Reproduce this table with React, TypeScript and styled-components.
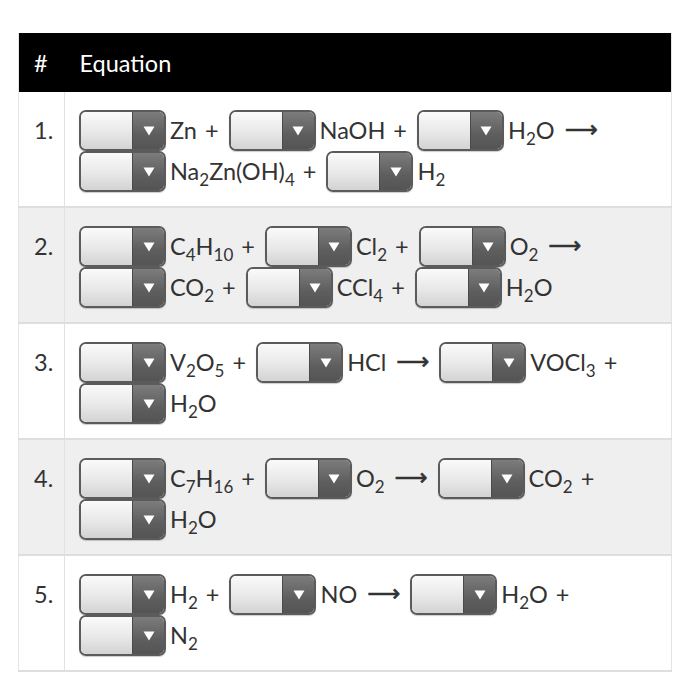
import React from 'react';
import styled, { createGlobalStyle } from 'styled-components';

type Part = string | { sub: string };
type Term = { formula: Part[]; op?: string };

const ARROW = '\u27F6';

const f = (...parts: Part[]) => parts;
const s = (sub: string) => ({ sub });

const equations: Term[][] = [
  [
    { formula: f('Zn'), op: '+' },
    { formula: f('NaOH'), op: '+' },
    { formula: f('H', s('2'), 'O'), op: ARROW },
    { formula: f('Na', s('2'), 'Zn(OH)', s('4')), op: '+' },
    { formula: f('H', s('2')) },
  ],
  [
    { formula: f('C', s('4'), 'H', s('10')), op: '+' },
    { formula: f('Cl', s('2')), op: '+' },
    { formula: f('O', s('2')), op: ARROW },
    { formula: f('CO', s('2')), op: '+' },
    { formula: f('CCl', s('4')), op: '+' },
    { formula: f('H', s('2'), 'O') },
  ],
  [
    { formula: f('V', s('2'), 'O', s('5')), op: '+' },
    { formula: f('HCl'), op: ARROW },
    { formula: f('VOCl', s('3')), op: '+' },
    { formula: f('H', s('2'), 'O') },
  ],
  [
    { formula: f('C', s('7'), 'H', s('16')), op: '+' },
    { formula: f('O', s('2')), op: ARROW },
    { formula: f('CO', s('2')), op: '+' },
    { formula: f('H', s('2'), 'O') },
  ],
  [
    { formula: f('H', s('2')), op: '+' },
    { formula: f('NO'), op: ARROW },
    { formula: f('H', s('2'), 'O'), op: '+' },
    { formula: f('N', s('2')) },
  ],
];

const GlobalStyle = createGlobalStyle`
  body {
    margin: 0;
    background: #fff;
    font-family: Lato, "Open Sans", sans-serif;
    color: #333;
  }
`;

const Page = styled.div`
  padding: 33px 17px 20px 18px;
`;

const Table = styled.table`
  width: 654px;
  table-layout: fixed;
  border-collapse: collapse;
  border: 1px solid #e4e4e4;
  border-top: none;
  font-size: 23.5px;
`;

const HeadCell = styled.th`
  height: 59px;
  padding: 0 0 0 15px;
  background: #000;
  color: #fff;
  font-weight: 400;
  text-align: left;
`;

const Row = styled.tr<{ $shaded: boolean }>`
  background: ${({ $shaded }) => ($shaded ? '#efefef' : '#fff')};
  border-bottom: 2px solid #dedede;
`;

const NumCell = styled.td`
  vertical-align: top;
  padding: 18px 0 14px 15px;
  line-height: 41px;
  border-right: 1px solid #e2e2e2;
`;

const EqCell = styled.td`
  vertical-align: top;
  padding: 18px 12px 14px 14px;
`;

const Terms = styled.div`
  display: flex;
  flex-wrap: wrap;
  align-items: center;
  column-gap: 10px;
`;

const TermGroup = styled.span`
  display: inline-flex;
  align-items: center;
  gap: 4px;
  height: 41px;
  white-space: nowrap;
`;

const Formula = styled.span`
  line-height: 1;
`;

const Sub = styled.sub`
  font-size: 17px;
  line-height: 0;
  vertical-align: -6px;
`;

const Op = styled.span<{ $arrow: boolean }>`
  margin-left: ${({ $arrow }) => ($arrow ? '10px' : '8px')};
  font-family: ${({ $arrow }) => ($arrow ? '"DejaVu Sans", sans-serif' : 'inherit')};
  font-size: ${({ $arrow }) => ($arrow ? '23px' : 'inherit')};
  -webkit-text-stroke: ${({ $arrow }) => ($arrow ? '0.6px #333' : '0')};
  position: relative;
  top: ${({ $arrow }) => ($arrow ? '-2px' : '0')};
`;

const Select = styled.span`
  display: inline-flex;
  width: 87px;
  height: 41px;
  box-sizing: border-box;
  border: 2px solid #5b5b5b;
  border-radius: 7px;
  overflow: hidden;
  box-shadow: 0 1px 1px rgba(0, 0, 0, 0.2);
`;

const SelectValue = styled.span`
  flex: 1;
  background: linear-gradient(#fafafa, #e8e8e8 55%, #d3d3d3);
`;

const SelectButton = styled.span`
  width: 31px;
  display: flex;
  align-items: center;
  justify-content: center;
  background: linear-gradient(#7c7c7c, #5e5e5e 60%, #545454);
  border-left: 1px solid #4a4a4a;
`;

const Dropdown = () => (
  <Select>
    <SelectValue />
    <SelectButton>
      <svg width="12" height="10" viewBox="0 0 12 10">
        <path d="M0.5 0.5 L11.5 0.5 L6 9.5 Z" fill="#fff" />
      </svg>
    </SelectButton>
  </Select>
);

const App = () => (
  <Page>
    <GlobalStyle />
    <Table>
      <colgroup>
        <col style={{ width: 46 }} />
        <col />
      </colgroup>
      <thead>
        <tr>
          <HeadCell>#</HeadCell>
          <HeadCell>Equation</HeadCell>
        </tr>
      </thead>
      <tbody>
        {equations.map((terms, i) => (
          <Row key={i} $shaded={i % 2 === 1}>
            <NumCell>{i + 1}.</NumCell>
            <EqCell>
              <Terms>
                {terms.map((t, j) => (
                  <TermGroup key={j}>
                    <Dropdown />
                    <Formula>
                      {t.formula.map((p, k) =>
                        typeof p === 'string' ? p : <Sub key={k}>{p.sub}</Sub>
                      )}
                      {t.op && <Op $arrow={t.op === ARROW}>{t.op}</Op>}
                    </Formula>
                  </TermGroup>
                ))}
              </Terms>
            </EqCell>
          </Row>
        ))}
      </tbody>
    </Table>
  </Page>
);

export default App;
